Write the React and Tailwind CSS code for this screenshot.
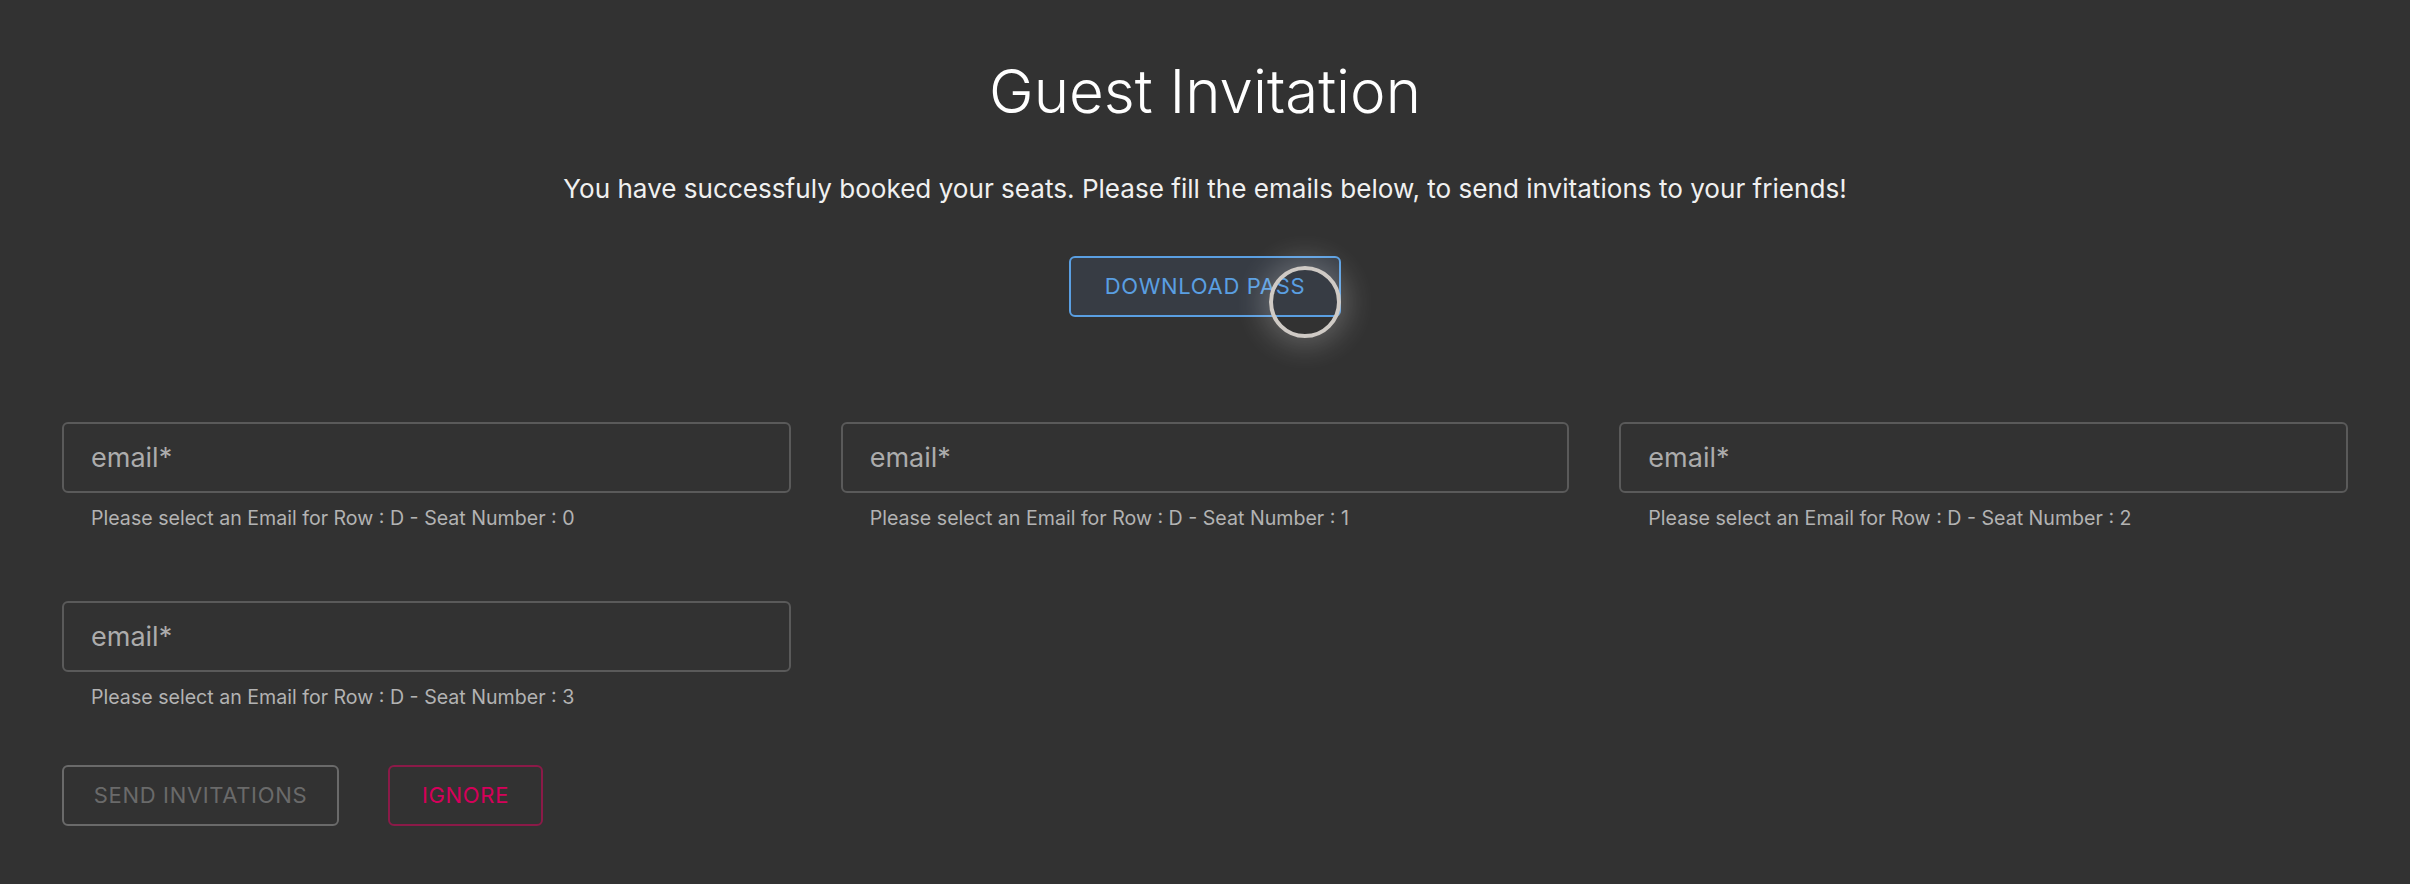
import React from 'react'

const seats = [0, 1, 2, 3]

function EmailField({ seat }) {
  return (
    <div className="flex flex-col">
      <input
        type="email"
        placeholder="email*"
        className="h-[71px] w-full rounded-[6px] border-2 border-[#5a5a5a] bg-transparent px-[27px] text-[27px] text-[#e0e0e0] placeholder:text-[#acacac] outline-none"
      />
      <p className="mt-[10px] pl-[29px] text-[19.6px] leading-[30px] text-[#b3b3b3]">
        Please select an Email for Row : D - Seat Number : {seat}
      </p>
    </div>
  )
}

export default function App() {
  return (
    <div className="min-h-screen bg-[#323232] px-[62px] pt-[61px] font-['Inter',sans-serif]">
      {/* cabecera */}
      <h1 className="text-center text-[60px] font-light leading-none text-white">
        Guest Invitation
      </h1>
      <p className="mt-[55px] text-center text-[26.1px] leading-none text-[#f0f0f0]">
        You have successfuly booked your seats. Please fill the emails below, to send invitations to your friends!
      </p>

      <div className="mt-[54px] flex justify-center">
        <div className="relative">
          <button className="h-[61px] w-[272px] rounded-[6px] border-2 border-[#5a9fe2] bg-[#373c44] text-[22px] uppercase tracking-[0.03em] text-[#5a9fe2]">
            Download Pass
          </button>
          {/* resaltado del cursor */}
          <div className="pointer-events-none absolute left-[200px] top-[10px] h-[72px] w-[72px] rounded-full border-4 border-[#cfcac5] shadow-[0_0_28px_8px_rgba(255,255,255,0.22)]" />
        </div>
      </div>

      {/* emails */}
      <div className="mt-[105px] grid grid-cols-3 gap-x-[50px] gap-y-[68px]">
        {seats.map(s => (
          <EmailField key={s} seat={s} />
        ))}
      </div>

      {/* acciones */}
      <div className="mt-[53px] flex gap-[49px]">
        <button className="h-[61px] w-[277px] rounded-[6px] border-2 border-[#6a6a6a] text-[22px] uppercase tracking-[0.03em] text-[#6a6a6a]">
          Send Invitations
        </button>
        <button className="h-[61px] w-[155px] rounded-[6px] border-2 border-[#8b1a48] text-[22px] uppercase tracking-[0.03em] text-[#d6005a]">
          Ignore
        </button>
      </div>
    </div>
  )
}
